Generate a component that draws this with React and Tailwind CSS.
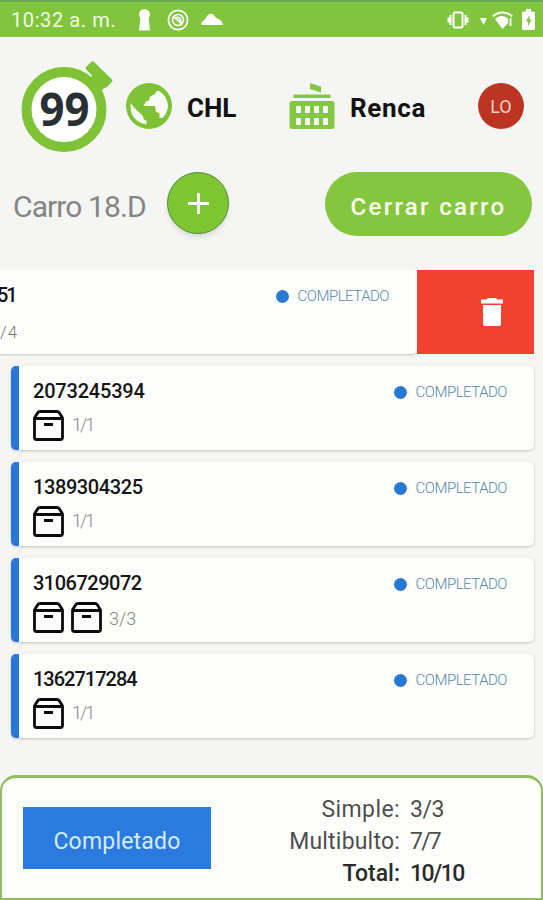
const PEDIDOS = [
  { id: '2073245394', cajas: 1, bultos: '1/1', espaciado: 'tracking-[-0.2px]' },
  { id: '1389304325', cajas: 1, bultos: '1/1', espaciado: 'tracking-[-0.4px]' },
  { id: '3106729072', cajas: 2, bultos: '3/3', espaciado: 'tracking-[-0.5px]' },
  { id: '1362717284', cajas: 1, bultos: '1/1', espaciado: 'tracking-[-1px]' },
];

function BarraEstado() {
  return (
    <div className="flex h-[37px] items-center border-t-2 border-[#68a658] bg-[#81c53c] pr-[8px] pl-[11px] text-white">
      <span className="w-[127px] text-[20px] leading-none tracking-[0.6px] whitespace-nowrap text-[#f2fae8]">10:32 a. m.</span>
      <svg className="h-[22px] w-[13px]" viewBox="0 0 13 22" fill="currentColor">
        <circle cx="6.5" cy="5.5" r="5.5" />
        <path d="M2.500 8h8l1.500 13.500H1z" />
      </svg>
      <svg className="ml-[16px] h-[22px] w-[22px]" viewBox="0 0 22 22" fill="none" stroke="currentColor" strokeWidth="1.8">
        <circle cx="11" cy="11" r="9.600" />
        <circle cx="11" cy="11" r="5.500" strokeWidth="1.600" />
        <path d="M6 7l9 8M9 9c3-2 5 1 5 4" strokeWidth="1.800" />
      </svg>
      <svg className="ml-[12px] h-[13px] w-[22px]" viewBox="0 0 22 13" fill="currentColor">
        <path d="M2.500 12C-1 12 0 8 4 7 6 0 12-2 15 5c4 1 7 4 6.500 7z" />
      </svg>
      <div className="ml-auto flex items-center">
        <svg className="h-[18px] w-[22px]" viewBox="0 0 22 18" fill="none" stroke="currentColor">
          <rect x="6.500" y="1.500" width="9" height="15" rx="1.500" strokeWidth="2" />
          <path d="M3.500 4v10M18.500 4v10M1.500 6.500v5M20.500 6.500v5" strokeWidth="2" />
        </svg>
        <svg className="mt-[4px] ml-[11px] h-[7px] w-[7px]" viewBox="0 0 7 7" fill="currentColor">
          <path d="M0 0h7L3.500 7z" />
        </svg>
        <svg className="ml-[5px] h-[18px] w-[21px]" viewBox="0 0 21 18" fill="none" stroke="currentColor">
          <path d="M.8 5.500C6 .2 15 .2 20.200 5.500" strokeWidth="2" />
          <path d="M3 8c4-4 10-4 13 0v4l-5.500 6z" fill="currentColor" stroke="none" />
          <path d="M18.500 7v8" strokeWidth="1.800" />
        </svg>
        <svg className="ml-[9px] h-[21px] w-[13px]" viewBox="0 0 13 21">
          <path d="M4 0h5v2.500h2.500A1.500 1.500 0 0 1 13 4v15.500a1.500 1.500 0 0 1-1.500 1.500h-10A1.500 1.500 0 0 1 0 19.500V4a1.500 1.500 0 0 1 1.500-1.500H4z" fill="currentColor" />
          <path d="M7.500 6L3.800 12.500h2.300V17l3.500-6.500H7.500z" fill="#81c53c" />
        </svg>
      </div>
    </div>
  );
}

function Encabezado() {
  return (
    <header className="flex h-[135px] items-start pt-[22px] pl-[20px]">
      <svg className="h-[94px] w-[94px] shrink-0" viewBox="0 0 94 94">
        <circle cx="44" cy="50.500" r="37.500" fill="#fff" stroke="#7dc335" strokeWidth="10" />
        <g transform="translate(79 15.500) rotate(44)" fill="#7dc335">
          <rect x="-14.500" y="-5.500" width="29" height="11" rx="2" />
          <path d="M-4 4h17v6H-4z" />
        </g>
        <text x="44.500" y="67" textAnchor="middle" fontFamily="Open Sans, sans-serif" fontSize="46" fontWeight="700" textLength="50" lengthAdjust="spacingAndGlyphs" fill="#293033">99</text>
      </svg>
      <svg className="mt-[24px] ml-[12px] size-[46px] shrink-0" viewBox="0 0 46 46">
        <circle cx="23" cy="23" r="23" fill="#7dc335" />
        <g fill="#f8faf6">
          <path d="M30.500 8L29 11l-5 2.500-1 4-3 1-2.500 4.500H29l1 6 3.500 1v5h3q5-5 5.500-12-.5-10-9-15z" />
          <path d="M4.500 20l4.500 5.500 8 7.500.5 3 3 2v3.500Q3 38 4.500 20z" />
        </g>
      </svg>
      <span className="mt-[35px] ml-[15px] w-[102px] text-[26px] leading-[29px] font-bold text-[#111]">CHL</span>
      <svg className="mt-[24px] h-[46px] w-[46px] shrink-0" viewBox="0 0 46 46" fill="#84c744">
        <path d="M21 0l11 3.500v6L21 6zM4.500 11.500h37v3.500h-37z" />
        <rect x="0.500" y="18" width="45" height="28" rx="3" />
        <g fill="#f5f6f4">
          <path d="M7 23h5v7H7zM16 23h5v7h-5zM25 23h5v7h-5zM34 23h5v7h-5zM7 35h5v7H7zM16 35h5v7h-5zM25 35h5v7h-5zM34 35h5v7h-5z" />
        </g>
      </svg>
      <span className="mt-[35px] ml-[15px] text-[26px] leading-[29px] font-bold tracking-[0.7px] text-[#111]">Renca</span>
      <div className="mt-[24px] mr-[19px] ml-auto flex size-[46px] shrink-0 items-center justify-center rounded-full bg-[#bd3522] text-[18px] text-[#efd1c9]">
        LO
      </div>
    </header>
  );
}

function Acciones() {
  return (
    <div className="flex h-[98px] items-start pr-[11px] pl-[13px]">
      <span className="mt-[17px] w-[154px] text-[30px] leading-[36px] tracking-[-0.9px] whitespace-nowrap text-[#858585]">Carro 18.D</span>
      <button className="flex size-[62px] items-center justify-center rounded-full border border-[#528c3c] bg-[#7dc632] shadow-md">
        <svg className="size-[21px]" viewBox="0 0 21 21" stroke="#fff" strokeWidth="2.800">
          <path d="M10.500 0v21M0 10.500h21" />
        </svg>
      </button>
      <button className="ml-auto h-[64px] w-[207px] rounded-full bg-[#84c73e] pt-[5px] text-[24px] font-medium tracking-[2.3px] whitespace-nowrap text-[#fbfff2]">
        Cerrar carro
      </button>
    </div>
  );
}

function Caja() {
  return (
    <svg className="h-[31px] w-[31px]" viewBox="0 0 31 31" fill="none" stroke="#0b0b0b" strokeWidth="2.800" strokeLinejoin="round">
      <path d="M1.500 8v19.500a2 2 0 0 0 2 2h24a2 2 0 0 0 2-2V8l-3-5q-1-1.500-2.500-1.500H7Q5.500 1.500 4.500 3z" />
      <path d="M1.500 8.500h28M11 14.500h9" />
    </svg>
  );
}

function Estado() {
  return (
    <div className="flex h-[14px] items-center">
      <span className="size-[13px] rounded-full bg-[#2878d4]" />
      <span className="ml-[9px] text-[15px] leading-none font-light tracking-[-0.5px] text-[#5489ad]">COMPLETADO</span>
    </div>
  );
}

function Pedido({ id, cajas, bultos, espaciado }) {
  return (
    <li className="flex h-[84px] justify-between rounded-[5px] border-l-8 border-[#2876d5] bg-[#fdfefc] pt-[19px] pr-[27px] pl-[14px] shadow-[0_1px_3px_#0003]">
      <div>
        <p className={`text-[20px] leading-[13px] font-medium text-[#161616] ${espaciado}`}>{id}</p>
        <div className="mt-[12px] flex h-[31px] items-center gap-[7px]">
          {Array.from({ length: cajas }, (_, i) => (
            <Caja key={i} />
          ))}
          <span
            className={
              cajas > 1
                ? 'pt-[3px] text-[18px] leading-none font-light text-[#858585]'
                : 'pb-[2px] pl-px text-[18px] leading-none font-light tracking-[-2px] text-[#858585]'
            }
          >
            {bultos}
          </span>
        </div>
      </div>
      <Estado />
    </li>
  );
}

// Fila deslizada hacia la izquierda con la acción de eliminar a la vista
function PedidoDeslizado() {
  return (
    <div className="flex h-[84px]">
      <div className="flex w-[417px] justify-between rounded-br-[5px] bg-[#fdfefc] pt-[19px] pr-[28px] shadow-[0_1px_2px_#0003]">
        <div>
          <p className="-ml-[3px] text-[20px] leading-[13px] font-medium tracking-[-2px] text-[#161616]">51</p>
          <p className="mt-[22px] text-[17px] leading-[16px] font-light tracking-[1px] text-[#777]">/4</p>
        </div>
        <Estado />
      </div>
      <button className="flex w-[117px] items-center justify-center bg-[#f2422f] pl-[33px]">
        <svg className="h-[28px] w-[22px]" viewBox="0 0 22 28" fill="#fff">
          <path d="M7 0h8l1.500 1.500H22v4H0v-4h5.500zM2 7h18v19a2 2 0 0 1-2 2H4a2 2 0 0 1-2-2z" />
        </svg>
      </button>
    </div>
  );
}

function Resumen() {
  return (
    <footer className="mt-auto flex h-[125px] items-start rounded-t-[16px] border-2 border-t-3 border-[#8fbf5c] bg-[#fdfefc] pt-[29px] pl-[21px]">
      <button className="h-[62px] w-[188px] bg-[#2a7adf] pt-[8px] text-[23px] tracking-[0.2px] text-[#d4ecfc]">Completado</button>
      <dl className="mt-[-13px] ml-[60px] grid grid-cols-[129px_auto] gap-x-[10px] text-[23px] leading-[32px] text-[#4e4e4e]">
        <dt className="text-right tracking-[0.4px]">Simple:</dt>
        <dd className="tracking-[-0.5px]">3/3</dd>
        <dt className="text-right tracking-[0.2px] whitespace-nowrap">Multibulto:</dt>
        <dd className="tracking-[-1.8px]">7/7</dd>
        <dt className="text-right font-medium text-[#2b2b2b]">Total:</dt>
        <dd className="font-medium tracking-[-1.5px] text-[#2b2b2b]">10/10</dd>
      </dl>
    </footer>
  );
}

export default function App() {
  return (
    <div className="flex h-[900px] w-[543px] flex-col overflow-hidden bg-[#f5f6f4] font-['Roboto',sans-serif]">
      <BarraEstado />
      <Encabezado />
      <Acciones />
      <PedidoDeslizado />
      <ul className="mt-[12px] mr-[9px] ml-[11px] flex flex-col gap-[12px]">
        {PEDIDOS.map((p) => (
          <Pedido key={p.id} {...p} />
        ))}
      </ul>
      <Resumen />
    </div>
  );
}
